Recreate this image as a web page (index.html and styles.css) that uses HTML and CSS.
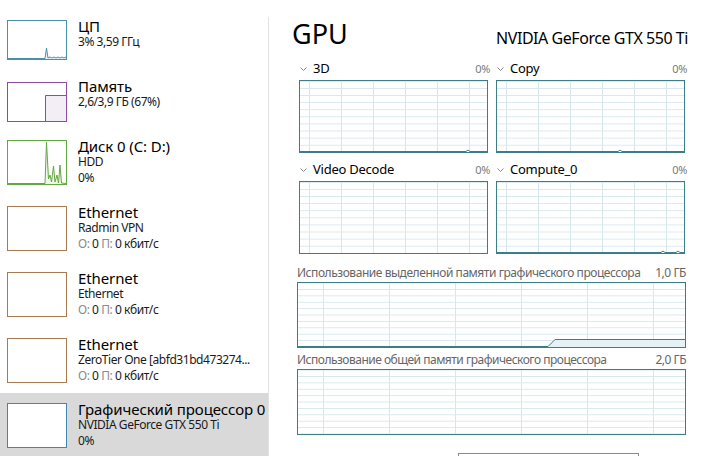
FILE: index.html
```html
<!DOCTYPE html>
<html lang="ru">
<head>
<meta charset="utf-8">
<title>Диспетчер задач — GPU</title>
<link rel="stylesheet" href="styles.css">
</head>
<body>
<div class="app">
  <aside class="sidebar">
    <div class="item">
      <div class="thumb cpu">
        <svg width="58" height="38" viewBox="0 0 58 38"><polygon class="fill" points="0,38 37,38 38.5,27 40,37 42,36 44,37 46,36 48,37 50,36 52,37 54,36 56,37 58,36 58,38"/><polyline points="0,37.5 37,37.5 38.5,27 40,37 42,36 44,37 46,36 48,37 50,36 52,37 54,36 56,37 58,36"/></svg>
      </div>
      <div class="info">
        <div class="title">ЦП</div>
        <div class="sub">3% 3,59 ГГц</div>
      </div>
    </div>
    <div class="item">
      <div class="thumb mem">
        <svg width="58" height="38" viewBox="0 0 58 38"><rect class="fill" x="37.5" y="12.5" width="21" height="26"/><polyline points="37.5,38 37.5,12.5 58,12.5"/></svg>
      </div>
      <div class="info">
        <div class="title">Память</div>
        <div class="sub">2,6/3,9 ГБ (67%)</div>
      </div>
    </div>
    <div class="item tall">
      <div class="thumb disk">
        <svg width="58" height="43" viewBox="0 0 58 43"><polygon class="fill" points="0,43 37,43 38.5,1 40.5,38 42,34 43.5,41 45.5,25 47,41 49,34 50.5,42 52,24 53.5,42 58,43"/><polyline points="0,42.5 37,42.5 38.5,1 40.5,38 42,34 43.5,41 45.5,25 47,41 49,34 50.5,42 52,24 53.5,42 58,42.5"/></svg>
      </div>
      <div class="info">
        <div class="title">Диск 0 (C: D:)</div>
        <div class="sub">HDD</div>
        <div class="sub">0%</div>
      </div>
    </div>
    <div class="item tall">
      <div class="thumb eth"></div>
      <div class="info">
        <div class="title">Ethernet</div>
        <div class="sub">Radmin VPN</div>
        <div class="sub"><span class="dim">О:</span> 0 <span class="dim">П:</span> 0 кбит/с</div>
      </div>
    </div>
    <div class="item tall">
      <div class="thumb eth"></div>
      <div class="info">
        <div class="title">Ethernet</div>
        <div class="sub">Ethernet</div>
        <div class="sub"><span class="dim">О:</span> 0 <span class="dim">П:</span> 0 кбит/с</div>
      </div>
    </div>
    <div class="item tall last">
      <div class="thumb eth"></div>
      <div class="info">
        <div class="title">Ethernet</div>
        <div class="sub">ZeroTier One [abfd31bd473274...</div>
        <div class="sub"><span class="dim">О:</span> 0 <span class="dim">П:</span> 0 кбит/с</div>
      </div>
    </div>
    <div class="item tall selected">
      <div class="thumb gpu"></div>
      <div class="info">
        <div class="title">Графический процессор 0</div>
        <div class="sub">NVIDIA GeForce GTX 550 Ti</div>
        <div class="sub">0%</div>
      </div>
    </div>
  </aside>
  <div class="divider"></div>
  <main class="content">
    <header class="header">
      <h1 class="gpu-title">GPU</h1>
      <div class="model">NVIDIA GeForce GTX 550 Ti</div>
    </header>
    <section class="engines">
      <div class="engine">
        <div class="elabel">
          <svg class="chev" width="7" height="4" viewBox="0 0 7 4"><polyline points="0.5,0.5 3.5,3.5 6.5,0.5"/></svg>
          <span class="ename">3D</span>
          <span class="pct">0%</span>
        </div>
        <div class="graph small">
          <svg width="187" height="71" viewBox="0 0 187 71"><polyline class="line" points="0,70.5 166,70.5 168,69 170,70.5 187,70.5"/></svg>
        </div>
      </div>
      <div class="engine">
        <div class="elabel">
          <svg class="chev" width="7" height="4" viewBox="0 0 7 4"><polyline points="0.5,0.5 3.5,3.5 6.5,0.5"/></svg>
          <span class="ename">Copy</span>
          <span class="pct">0%</span>
        </div>
        <div class="graph small">
          <svg width="187" height="71" viewBox="0 0 187 71"><polyline class="line" points="0,70.5 121,70.5 123,69 125,70.5 187,70.5"/></svg>
        </div>
      </div>
      <div class="engine">
        <div class="elabel">
          <svg class="chev" width="7" height="4" viewBox="0 0 7 4"><polyline points="0.5,0.5 3.5,3.5 6.5,0.5"/></svg>
          <span class="ename">Video Decode</span>
          <span class="pct">0%</span>
        </div>
        <div class="graph small">
          <svg width="187" height="71" viewBox="0 0 187 71"></svg>
        </div>
      </div>
      <div class="engine">
        <div class="elabel">
          <svg class="chev" width="7" height="4" viewBox="0 0 7 4"><polyline points="0.5,0.5 3.5,3.5 6.5,0.5"/></svg>
          <span class="ename">Compute_0</span>
          <span class="pct">0%</span>
        </div>
        <div class="graph small">
          <svg width="187" height="71" viewBox="0 0 187 71"><polyline class="line" points="0,70.5 164,70.5 166,69 168,70.5 179,70.5 181,69 183,70.5 187,70.5"/></svg>
        </div>
      </div>
    </section>
    <section class="mem first">
      <div class="mlabel"><span>Использование выделенной памяти графического процессора</span><span>1,0 ГБ</span></div>
      <div class="graph wide">
        <svg width="387" height="64" viewBox="0 0 387 64"><polygon class="area" points="250,64 257,56 387,56 387,64"/><polyline class="line" points="0,63.5 250,63.5 257,56.5 387,56.5"/></svg>
      </div>
    </section>
    <section class="mem">
      <div class="mlabel shared"><span>Использование общей памяти графического процессора</span><span>2,0 ГБ</span></div>
      <div class="graph wide">
        <svg width="387" height="64" viewBox="0 0 387 64"></svg>
      </div>
    </section>
    <div class="bottom-box"></div>
  </main>
</div>
</body>
</html>
```

FILE: styles.css
```css
html, body {
  margin: 0;
  padding: 0;
  height: 456px;
  overflow: hidden;
  background: #ffffff;
}

body {
  font-family: "Noto Sans", "Open Sans", sans-serif;
  color: #000;
}

.app {
  display: flex;
  height: 456px;
  overflow: hidden;
}

/* Sidebar */
.sidebar {
  width: 268px;
  flex: none;
  padding-top: 10px;
  display: flex;
  flex-direction: column;
}

.item {
  height: 60px;
  box-sizing: border-box;
  padding: 8px 0 0 7px;
  display: flex;
  gap: 11px;
  flex: none;
}

.item.tall { height: 66px; }
.item.last { height: 65px; }

.item.selected {
  background: #d9d9d9;
  height: 63px;
}

.thumb {
  width: 60px;
  height: 40px;
  box-sizing: border-box;
  border: 1px solid;
  background: #fff;
  margin-top: 2px;
  flex: none;
}

.item.tall .thumb { height: 45px; }

.thumb svg { display: block; }
.thumb polyline { fill: none; stroke-width: 1; }

.thumb.cpu { border-color: #4b90aa; }
.thumb.cpu polyline { stroke: #4b90aa; }
.thumb.cpu .fill { fill: #eef5f9; }

.thumb.mem { border-color: #8e4a9e; }
.thumb.mem polyline { stroke: #8e4a9e; }
.thumb.mem .fill { fill: #f3eef6; }

.thumb.disk { border-color: #62a840; }
.thumb.disk polyline { stroke: #62a840; }
.thumb.disk .fill { fill: #f0f7ea; }

.thumb.eth { border-color: #a67b50; }
.thumb.gpu { border-color: #3c88ae; }

.info {
  display: flex;
  flex-direction: column;
  min-width: 0;
}

.title {
  font-size: 15px;
  line-height: 16px;
  letter-spacing: -0.1px;
  white-space: nowrap;
}

.sub {
  font-size: 12px;
  line-height: 16px;
  letter-spacing: -0.45px;
  white-space: nowrap;
  color: #1a1a1a;
}

.dim { color: #8a8a8a; }

.divider {
  width: 1px;
  flex: none;
  margin-top: 17px;
  background: #e2e2e2;
}

/* Content */
.content {
  flex: 1;
  min-width: 0;
  padding: 17px 15px 0 28px;
  display: flex;
  flex-direction: column;
}

.header {
  display: flex;
  justify-content: space-between;
  align-items: baseline;
  height: 34px;
  margin-right: -2px;
}

.gpu-title {
  margin: 0 0 0 -5px;
  font-size: 27px;
  line-height: 34px;
  font-weight: normal;
}

.model {
  font-size: 16px;
  line-height: 34px;
  letter-spacing: -0.45px;
}

.engines {
  margin: 8px 1px 0 2px;
  display: grid;
  grid-template-columns: 1fr 1fr;
  column-gap: 8px;
  row-gap: 7px;
}

.elabel {
  display: flex;
  align-items: baseline;
  height: 18px;
  margin-bottom: 3px;
  margin-right: -2px;
}

.chev {
  flex: none;
  align-self: center;
  margin: 2px 6px 0 1px;
}

.chev polyline {
  fill: none;
  stroke: #888;
  stroke-width: 1;
}

.ename {
  font-size: 13px;
  line-height: 18px;
  letter-spacing: -0.25px;
}

.pct {
  margin-left: auto;
  font-size: 11px;
  line-height: 18px;
  letter-spacing: -0.3px;
  color: #7a7a7a;
}

.graph {
  box-sizing: border-box;
  border: 1px solid #3a7f87;
  background-color: #fff;
}

.graph svg { display: block; }

.graph.small {
  height: 73px;
  background-image:
    linear-gradient(to right, #d6e8ec 1px, transparent 1px),
    linear-gradient(to bottom, #d6e8ec 1px, transparent 1px);
  background-size: 32px 100%, 100% 7.1px;
  background-position: 9px 0, 0 7px;
}

.graph.wide {
  height: 66px;
  background-image:
    linear-gradient(to right, #d6e8ec 1px, transparent 1px),
    linear-gradient(to bottom, #d6e8ec 1px, transparent 1px);
  background-size: 66px 100%, 100% 6.4px;
  background-position: 25px 0, 0 6px;
}

.graph .line {
  fill: none;
  stroke: #3a7f87;
  stroke-width: 1;
}

.graph .area {
  fill: #e4f2f6;
}

.mem { margin-top: 4px; }
.mem.first { margin-top: 11px; }

.mlabel {
  display: flex;
  justify-content: space-between;
  font-size: 12px;
  line-height: 16px;
  letter-spacing: -0.45px;
  white-space: nowrap;
  color: #666;
  margin-bottom: 1px;
}

.mlabel.shared { letter-spacing: -0.5px; }

.bottom-box {
  margin: 18px 0 0 161px;
  width: 181px;
  height: 3px;
  box-sizing: border-box;
  border: 1px solid #8a8a8a;
  border-bottom: none;
  flex: none;
}
```
